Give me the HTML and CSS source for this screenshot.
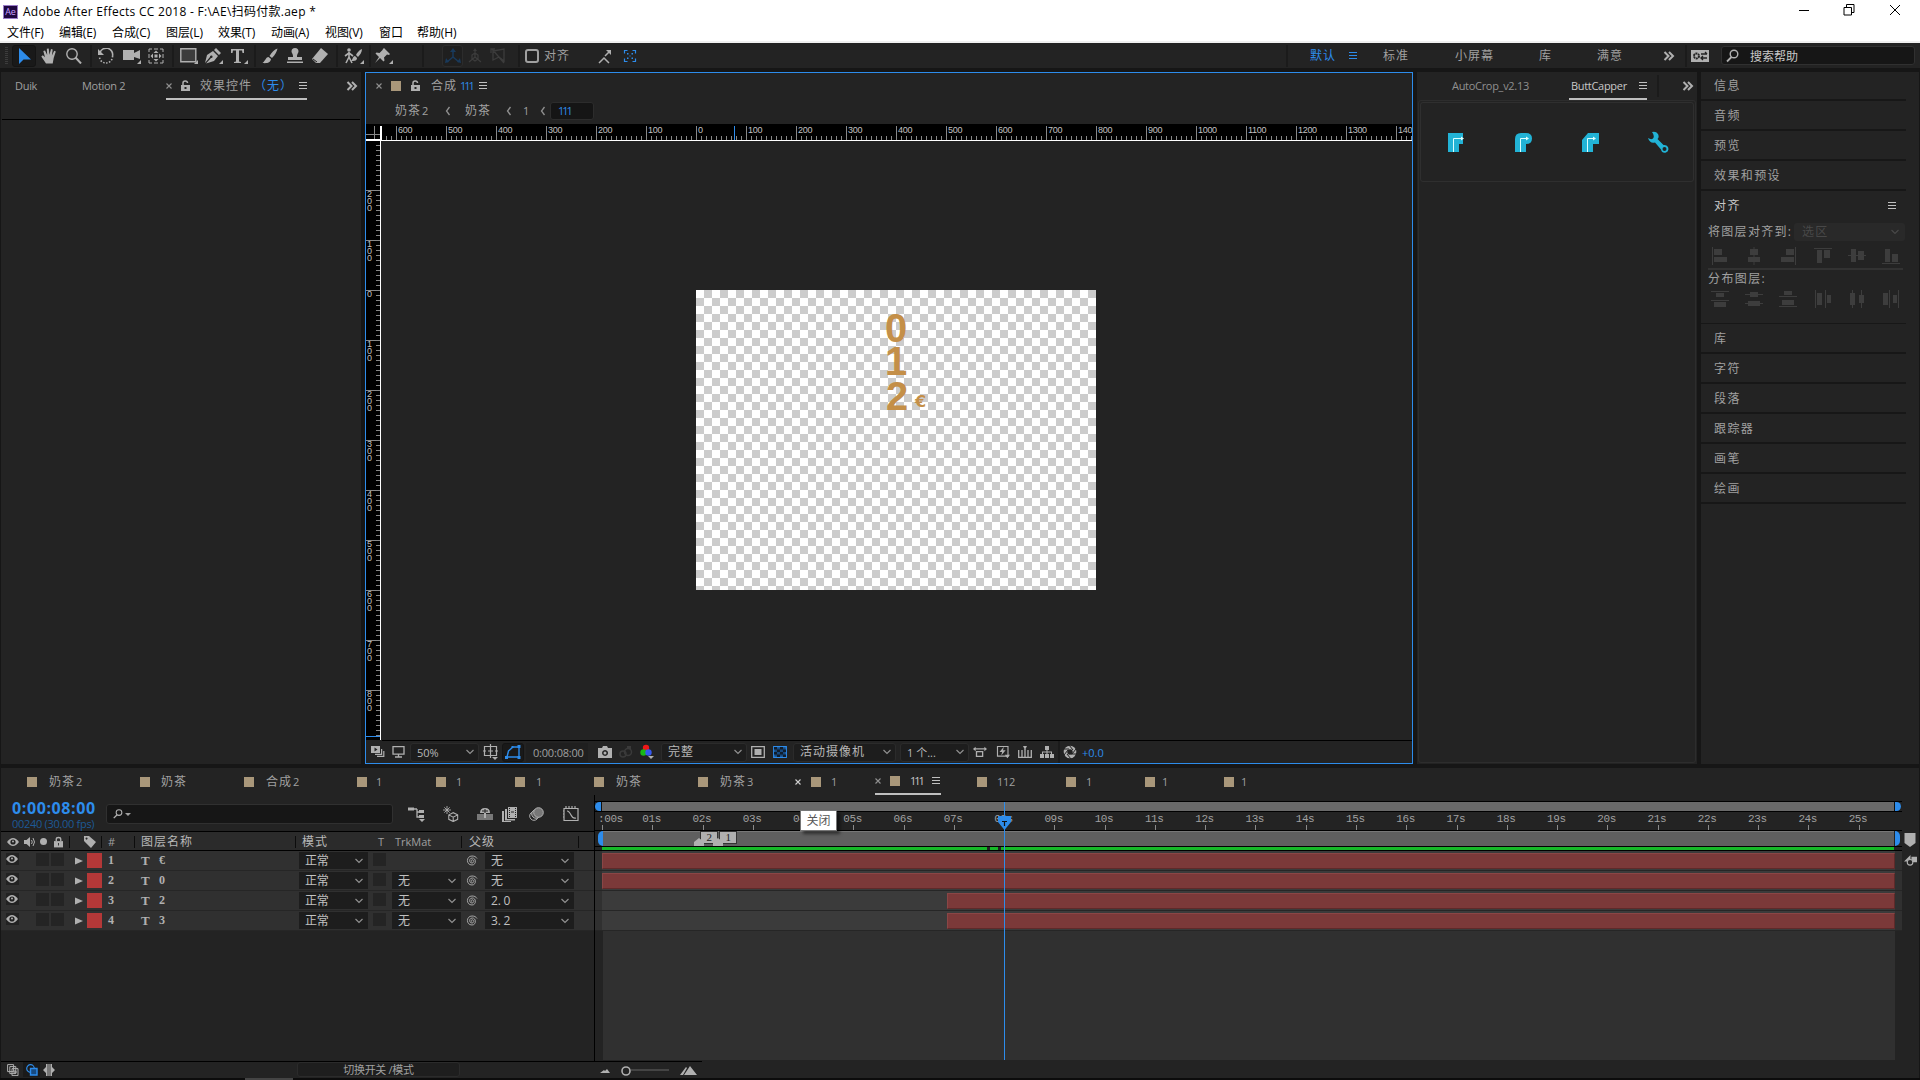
FILE: index.html
```
<!DOCTYPE html>
<html lang="zh-CN">
<head>
    <meta charset="UTF-8">
    <title>Adobe After Effects CC 2018 - F:\AE\扫码付款.aep *</title>
    <link rel="stylesheet" href="styles.css">
</head>
<body>
    <!-- icon sprite -->
    <svg class="sprite">
        <symbol id="arrow" viewBox="0 0 16 16"><path d="M3 0v16l4.500-4.500H15z"/></symbol>
        <symbol id="hand" viewBox="0 0 16 16"><path d="M5 15.500L.3 8.500l1.500-1.200L4 9.300 2.300 3l1.700-.6L6.200 7 5.800.700l1.900-.2L8.500 6.800 10 1l1.700.4L10.900 7.500l2.300-4.800 1.600.7L12.700 10l-1 5.500z"/></symbol>
        <symbol id="zoom" viewBox="0 0 16 16"><g fill="none" stroke="currentColor"><circle cx="6" cy="6" r="5.200" stroke-width="1.400"/><path d="M9.500 9.500L15 15.500" stroke-width="2"/></g></symbol>
        <symbol id="rotate" viewBox="0 0 16 16"><g fill="none" stroke="currentColor" stroke-width="1.600"><path d="M2 4.500A6.500 6.500 0 0 1 14.500 8"/><path d="M14.500 8A6.500 6.500 0 0 1 1.500 9" stroke-dasharray="1.500 1.500"/></g><path d="M0 1v6h6z"/></symbol>
        <symbol id="camera" viewBox="0 0 18 16"><path d="M0 2h11v3L17 2v9l-6-2v3H0zM18 12v4h-4z"/></symbol>
        <symbol id="panbehind" viewBox="0 0 16 16"><path d="M1 4V1h3M6 1h4M12 1h3v3M15 6v4M15 12v3h-3M10 15H6M4 15H1v-3M1 10V6" fill="none" stroke="currentColor"/><path d="M8 2.500L10.500 5h-5zM8 13.500L5.500 11h5zM2.500 8L5 5.500v5zM13.500 8L11 10.500v-5zM6.500 6.500h3v3h-3z"/></symbol>
        <symbol id="rect" viewBox="0 0 18 16"><path d="M.8.800h15v13H.8z" fill="#3c3c3c" stroke="currentColor" stroke-width="1.400"/><path d="M18 12v4h-4z"/></symbol>
        <symbol id="pen" viewBox="0 0 18 16"><path d="M0 15L2 7l6-4 5 5-4 5-8 2.500L6 10a1.300 1.300 0 1 0-1-1zM9 2l2-2 5 5-2 2zM18 12v4h-4z"/></symbol>
        <symbol id="type" viewBox="0 0 18 16"><path d="M1 1h13v4h-1.500L12 2.500H9v11l2 .5v1H4v-1l2-.5v-11H3L2.500 5H1zM18 12v4h-4z"/></symbol>
        <symbol id="brush" viewBox="0 0 16 16"><path d="M15.500.500c-3 1-6 4-8 7.500l2.500 2c3-3 5-6.500 5.500-9.500zM6.500 9C4 9 4 12 .5 15c4 .5 8 0 8.500-4z"/></symbol>
        <symbol id="stamp" viewBox="0 0 16 16"><path d="M6 8c0-2-1.500-3-1.500-4.500a3.500 3.500 0 0 1 7 0C11.500 5 10 6 10 8v1h5v3H1V9h5zM0 13.500h16V15H0z"/></symbol>
        <symbol id="eraser" viewBox="0 0 16 16"><path d="M9 0l7 6-8 9H4L0 11z"/><path d="M1 11l4 3" stroke="#232323"/></symbol>
        <symbol id="roto" viewBox="0 0 20 16"><circle cx="5" cy="2" r="1.800"/><path d="M5 4v5l3 6M5 9l-3 6M5 5L1 8M5 5l4 3" fill="none" stroke="currentColor" stroke-width="1.600"/><path d="M18 1c-3 1-5 4-6 6l2 2c2-2 4-5 4-8zM11 8c-2 0-2 3-4 5 3 0 6 0 6-3zM20 12v4h-4z"/></symbol>
        <symbol id="pin" viewBox="0 0 18 16"><path d="M9 0l6 6-1 1-2-.5L9 9.500l.5 3-1 1L5 10l-5 5 4-6-3.500-3.500 1-1 3 .5 3-3L8 1zM18 12v4h-4z"/></symbol>
        <symbol id="axis" viewBox="0 0 16 16"><path d="M8 9V2M8 9l-6 5M8 9l6 5" fill="none" stroke="currentColor" stroke-width="1.500"/><path d="M8 0l3 4H5zM0 15l1-5 3 4zM16 15l-1-5-3 4z"/></symbol>
        <symbol id="cube" viewBox="0 0 16 16"><path d="M8 9V2M8 9l-6 5M8 9l6 5M5 7l3-2 3 2v4l-3 2-3-2z" fill="none" stroke="currentColor" stroke-width="1.200"/><path d="M8 0l2 3H6z"/></symbol>
        <symbol id="view3d" viewBox="0 0 16 16"><path d="M3 3l11-2v12l-5-4-6 3zM2 1l12 14M1 5V1h4" fill="none" stroke="currentColor" stroke-width="1.300"/></symbol>
        <symbol id="snap" viewBox="0 0 16 16"><path d="M2 15l5-5 5 5M8 8l5-5" fill="none" stroke="currentColor" stroke-width="1.500"/><path d="M9 2h5v5z"/></symbol>
        <symbol id="snapbox" viewBox="0 0 16 16"><path d="M2.500 5.500v-3h3M10.500 2.500h3v3M13.500 10.500v3h-3M5.500 13.500h-3v-3" fill="none" stroke="currentColor" stroke-width="1.200"/><path d="M5 5h1.500v1.500H5zM9.500 5H11v1.500H9.500zM5 9.500h1.500V11H5zM9.500 9.500H11V11H9.500zM7.500 7.500h1v1h-1z"/></symbol>
        <symbol id="more" viewBox="0 0 12 10"><path d="M1.500 1l4 4-4 4M6 1l4 4-4 4" fill="none" stroke="currentColor" stroke-width="2"/></symbol>
        <symbol id="menu" viewBox="0 0 8 8"><path d="M0 0h8v1H0zM0 3h8v1H0zM0 6h8v1H0z"/></symbol>
        <symbol id="sync" viewBox="0 0 20 12"><path d="M1 0h18v12H1z"/><circle cx="6.500" cy="6" r="2.500" fill="none" stroke="#232323" stroke-width="2" stroke-dasharray="2 .6"/><path d="M11 4h6M15 2l2 2M11 8h6M13 6l-2 2 2 2" fill="none" stroke="#232323" stroke-width="1.300"/></symbol>
        <symbol id="search" viewBox="0 0 16 14"><circle cx="8" cy="5" r="3.800" fill="none" stroke="currentColor" stroke-width="1.400"/><path d="M5.500 8L1 12.500" stroke="currentColor" stroke-width="1.800"/></symbol>
        <symbol id="x" viewBox="0 0 6 6"><path d="M.5.500l5 5M5.500.500l-5 5" stroke="currentColor" stroke-width="1.100"/></symbol>
        <symbol id="lock" viewBox="0 0 10 12"><path d="M0 5h9v6H0zM3.500 7v2h2V7z" fill-rule="evenodd"/><path d="M2 5V3q0-2 2.200-2t2.300 2" fill="none" stroke="currentColor" stroke-width="1.500"/></symbol>
        <symbol id="locked" viewBox="0 0 10 12"><path d="M0 5h10v7H0z"/><path d="M2.500 5V3q0-2 2.500-2t2.500 2v2" fill="none" stroke="currentColor" stroke-width="1.500"/><path d="M4.500 7h1v3h-1z" fill="#2b2b2b"/></symbol>
        <symbol id="back" viewBox="0 0 6 10"><path d="M4.500 1L1.500 5l3 4" fill="none" stroke="currentColor" stroke-width="1.300"/></symbol>
        <symbol id="chev" viewBox="0 0 8 6"><path d="M.5 1L4 4.500 7.500 1" fill="none" stroke="currentColor" stroke-width="1.200"/></symbol>
        <symbol id="preview" viewBox="0 0 14 12"><path d="M0 0h9v7H0zM10 3h1.200v6H4V7.800h6zM12.200 5h1.200v6H6V9.800h6.200z"/><path d="M3.500 1.500v4l3-2z" fill="#232323"/></symbol>
        <symbol id="monitor" viewBox="0 0 14 12"><path d="M1 .7h11v7.500H1zM6.500 8v2.500M3 11h7" fill="none" stroke="currentColor" stroke-width="1.300"/></symbol>
        <symbol id="safe" viewBox="0 0 16 16"><path d="M1.500 2.500h12v9h-12zM7.500 0v14M0 7h3M12 7h3M5 7h5" fill="none" stroke="currentColor" stroke-width="1.200"/><path d="M9 13h6l-3 3z"/></symbol>
        <symbol id="mask" viewBox="0 0 16 14"><path d="M2 12L3.500 6 8 2h6v10z" fill="none" stroke="currentColor" stroke-width="1.400"/><path d="M0 11h3v3H0zM12.500 11h3v3h-3zM12.500 0h3v3h-3zM6.500 1h2v2h-2z"/></symbol>
        <symbol id="photo" viewBox="0 0 14 12"><path d="M0 2h4l1-2h4l1 2h4v10H0zM7 4a3 3 0 1 0 .1 0z" fill-rule="evenodd"/><circle cx="7" cy="7" r="1.500"/></symbol>
        <symbol id="ghost" viewBox="0 0 14 12"><circle cx="4" cy="8" r="3" fill="none" stroke="currentColor" stroke-width="1.500"/><circle cx="9" cy="6" r="3.500" fill="none" stroke="currentColor" stroke-width="1.500"/><path d="M8 0h4v3H8z"/></symbol>
        <symbol id="rgb" viewBox="0 0 16 16"><circle cx="6" cy="4" r="3.200" fill="#f01818"/><circle cx="3.500" cy="8.500" r="3.200" fill="#18b818"/><circle cx="8.500" cy="8.500" r="3.200" fill="#3558f0"/><path d="M8 12h6l-3 3z"/></symbol>
        <symbol id="region" viewBox="0 0 14 12"><path d="M.7.700h12.600v10.600H.7z" fill="none" stroke="currentColor" stroke-width="1.300"/><path d="M3.500 3h7v6h-7z"/></symbol>
        <symbol id="grid" viewBox="0 0 14 12"><path d="M.7.700h12.600v10.600H.7z" fill="#174a80" stroke="currentColor" stroke-width="1.200"/><path d="M1 1h3v2.500H1zM7 1h3v2.500H7zM4 3.500h3V6H4zM10 3.500h3V6h-3zM1 6h3v2.500H1zM7 6h3v2.500H7zM4 8.500h3V11H4zM10 8.500h3V11h-3z" fill="#101d2c"/></symbol>
        <symbol id="aspect" viewBox="0 0 16 12"><path d="M1 2.500h13M4 5.500h7v5.500H4z" fill="none" stroke="currentColor" stroke-width="1.500"/><path d="M0 2.500L3 0v5zM16 2.500L13 0v5z"/></symbol>
        <symbol id="fast" viewBox="0 0 16 14"><path d="M1.700.700h12v11h-12z" fill="none" stroke="currentColor" stroke-width="1.300"/><path d="M9 1L4 7h3l-1 4 5-6H8zM10 10h6l-3 4z"/></symbol>
        <symbol id="tl" viewBox="0 0 14 12"><path d="M.7 4v7.300h12.600V4M4 11V4M7 11V3M10 11V4" fill="none" stroke="currentColor" stroke-width="1.300"/><path d="M5 0h4L7 4z"/></symbol>
        <symbol id="flow" viewBox="0 0 14 12"><path d="M5 0h4v4H5zM0 8h4v4H0zM5 8h4v4H5zM10 8h4v4h-4zM6.500 4h1v4h-1zM2 5.500h10v1H2zM2 6h1v2H2zM11 6h1v2h-1z"/></symbol>
        <symbol id="aperture" viewBox="0 0 14 14"><circle cx="7" cy="7" r="4.500" fill="none" stroke="currentColor" stroke-width="3.600"/><path d="M6 0l4 5M13 4l-4 5M14 9H8M8 14L4 9M1 10l4-5M0 4h6" stroke="#232323"/></symbol>
        <symbol id="wrench" viewBox="0 0 22 22"><path d="M1 7Q4 9 6 7.500 8 5 5 1q4-1 6 2 1.500 3-.5 5l6 6q3-.5 4.500 2 1.500 4-2 5.500-4 1-5-3l-6-7Q3 13 1 7z"/><circle cx="17.500" cy="18" r="2" fill="#232323"/></symbol>
        <symbol id="al1" viewBox="0 0 18 18"><path d="M1 0h1v18H1zM3 2h8v6H3zM3 10h13v5H3z"/></symbol>
        <symbol id="al2" viewBox="0 0 18 18"><path d="M8.500 0h1v18h-1zM5 2h8v6H5zM3 10h12v5H3z"/></symbol>
        <symbol id="al3" viewBox="0 0 18 18"><path d="M16 0h1v18h-1zM7 2h8v6H7zM2 10h13v5H2z"/></symbol>
        <symbol id="al4" viewBox="0 0 18 18"><path d="M0 1h18v1H0zM3 3h5v13H3zM10 3h6v8h-6z"/></symbol>
        <symbol id="al5" viewBox="0 0 18 18"><path d="M0 8h18v1H0zM3 2h5v13H3zM10 4h6v9h-6z"/></symbol>
        <symbol id="al6" viewBox="0 0 18 18"><path d="M0 16h18v1H0zM3 2h5v13H3zM10 7h6v8h-6z"/></symbol>
        <symbol id="di1" viewBox="0 0 18 18"><path d="M0 1h18v1H0zM5 3h8v4H5zM0 10h18v1H0zM3 12h12v5H3z"/></symbol>
        <symbol id="di2" viewBox="0 0 18 18"><path d="M0 4h18v1H0zM5 2h8v5H5zM0 13h18v1H0zM3 11h12v5H3z"/></symbol>
        <symbol id="di3" viewBox="0 0 18 18"><path d="M0 6h18v1H0zM5 1h8v4H5zM0 16h18v1H0zM3 10h12v5H3z"/></symbol>
        <symbol id="di4" viewBox="0 0 18 18"><path d="M1 0h1v18H1zM3 3h5v12H3zM11 0h1v18h-1zM13 5h4v8h-4z"/></symbol>
        <symbol id="di5" viewBox="0 0 18 18"><path d="M4 0h1v18H4zM2 3h5v12H2zM13 0h1v18h-1zM11 5h5v8h-5z"/></symbol>
        <symbol id="di6" viewBox="0 0 18 18"><path d="M7 0h1v18H7zM1 3h5v12H1zM16 0h1v18h-1zM11 5h4v8h-4z"/></symbol>
        <symbol id="shy" viewBox="0 0 18 16"><path d="M5 3h4M9 3v8h4M9 6h3" fill="none" stroke="currentColor" stroke-width="1.300"/><path d="M0 1.500h6v3H0zM11 4h5v3h-5zM11 9h5v3h-5zM11 13h6l-3 3z"/></symbol>
        <symbol id="draft" viewBox="0 0 18 18"><path d="M4.500 0v9M0 4.500h9M1.500 1.500l6 6M7.500 1.500l-6 6" stroke="currentColor"/><path d="M6.500 10l5-2.500 5 2.500v5l-5 2.500-5-2.500zM6.500 10l5 2.500 5-2.500M11.500 12.500v5" fill="none" stroke="currentColor" stroke-width="1.200"/></symbol>
        <symbol id="shyguy" viewBox="0 0 16 14"><path d="M0 7h16v6H0z" opacity=".6"/><path d="M3 6q0-5 5-5t5 5zM7 6h2v5H7z"/><path d="M8 2v4M5 4h6" stroke="#232323"/></symbol>
        <symbol id="film" viewBox="0 0 16 14"><path d="M6 0h9v11H6zM3 2h2v10h8v1.500H3zM0 4h2v10h7v1H0z"/><path d="M7.500 1v9M13.500 1v9" stroke="#232323" stroke-dasharray="1 1"/><path d="M9 5h3" stroke="#232323"/></symbol>
        <symbol id="blur" viewBox="0 0 16 14"><circle cx="5" cy="9" r="4.300" fill="none" stroke="currentColor"/><circle cx="7" cy="7" r="4.300" fill="#555" stroke="currentColor"/><circle cx="9.500" cy="5.500" r="4.800" fill="#777" stroke="currentColor"/></symbol>
        <symbol id="graph" viewBox="0 0 16 16"><path d="M1 2.500h14v12H1zM4 5q2 0 4 4t5 3M3 0v2M6 0v2M9 0v2M12 0v2M0 5h1M0 8h1M0 11h1" fill="none" stroke="currentColor" stroke-width="1.200"/></symbol>
        <symbol id="eye" viewBox="0 0 12 8"><path d="M0 4q3-4 6-4t6 4q-3 4-6 4T0 4z"/><circle cx="6" cy="4" r="2.600" fill="#222"/><circle cx="6" cy="3.500" r="1"/></symbol>
        <symbol id="speaker" viewBox="0 0 12 12"><path d="M0 4h2.500L6 1v10L2.500 8H0z"/><path d="M7.500 4q1.500 2 0 4M9 2q3 4 0 8" fill="none" stroke="currentColor"/></symbol>
        <symbol id="tag" viewBox="0 0 12 12"><path d="M0 0h5l7 6-5 6-7-7zM2.500 1.500a1 1 0 1 0 .1 0z" fill-rule="evenodd"/></symbol>
        <symbol id="twirl" viewBox="0 0 8 8"><path d="M0 .5v7L8 4z"/></symbol>
        <symbol id="whip" viewBox="0 0 12 12"><path d="M6 6.500C5 6.500 5 4.800 6.300 4.800 8.500 4.800 8.300 8 6 8 2.800 8 2.800 3 6.300 3c4.200 0 4.200 7-.3 7C-.2 10 0 1 6 1c2.500 0 4 .8 5 2.500" fill="none" stroke="currentColor" stroke-width=".9"/></symbol>
        <symbol id="copies" viewBox="0 0 12 12"><path d="M.6.600h6v7h-6zM2.800 2.600h6v7h-6zM5 4.600h6v7H5zM6 8h4M8 6v4" fill="#232323" stroke="currentColor"/></symbol>
        <symbol id="modes" viewBox="0 0 12 12"><circle cx="4.500" cy="4.500" r="3.800" fill="none" stroke="currentColor" stroke-width="1.200"/><path d="M4.500 4.500h6.500v6.500H4.500z" fill="#174a80" stroke="currentColor" stroke-width="1.400"/></symbol>
        <symbol id="inout" viewBox="0 0 12 12"><path d="M3 0h6v3l3 3-3 3v3H3V9L0 6l3-3z"/><path d="M4 0h4v12H4z" fill="#777"/></symbol>
    </svg>

    <div class="titlebar">
        <span class="logo">Ae</span>
        <span class="app-name">Adobe After Effects CC 2018 - F:\AE\扫码付款.aep *</span>
        <svg class="winctl" viewBox="0 0 110 14"><path d="M0 7.500h10M45 4.500h7.500V12H45zM47.500 4V1.500H55V9.500h-2.500M91 2l10 10M101 2L91 12" fill="none" stroke="#000"/></svg>
    </div>
    <div class="menubar">
        <span>文件(F)</span><span>编辑(E)</span><span>合成(C)</span><span>图层(L)</span><span>效果(T)</span><span>动画(A)</span><span>视图(V)</span><span>窗口</span><span>帮助(H)</span>
    </div>

    <div class="toolbar">
        <i class="grip"></i>
        <span class="tool-on"><svg><use href="#arrow"/></svg></span>
        <svg><use href="#hand"/></svg>
        <svg><use href="#zoom"/></svg>
        <i class="sep"></i>
        <svg><use href="#rotate"/></svg>
        <svg class="w18"><use href="#camera"/></svg>
        <svg><use href="#panbehind"/></svg>
        <i class="sep"></i>
        <svg class="w18"><use href="#rect"/></svg>
        <svg class="w18"><use href="#pen"/></svg>
        <svg class="w18"><use href="#type"/></svg>
        <i class="sep"></i>
        <svg><use href="#brush"/></svg>
        <svg><use href="#stamp"/></svg>
        <svg><use href="#eraser"/></svg>
        <i class="sep"></i>
        <svg class="w20"><use href="#roto"/></svg>
        <i class="sep"></i>
        <svg class="w18"><use href="#pin"/></svg>
        <i class="sep"></i>
        <span class="tool-off"><svg><use href="#axis"/></svg></span>
        <svg class="dim"><use href="#cube"/></svg>
        <svg class="dim"><use href="#view3d"/></svg>
        <i class="sep"></i>
        <i class="checkbox"></i>
        <span class="cn">对齐</span>
        <svg><use href="#snap"/></svg>
        <svg class="blue"><use href="#snapbox"/></svg>
        <i class="sep"></i>
        <span class="cn blue">默认</span>
        <svg class="menu-ico blue"><use href="#menu"/></svg>
        <span class="cn">标准</span>
        <span class="cn">小屏幕</span>
        <span class="cn">库</span>
        <span class="cn">满意</span>
        <svg class="more"><use href="#more"/></svg>
        <i class="sep"></i>
        <svg class="sync"><use href="#sync"/></svg>
        <div class="help-search"><svg><use href="#search"/></svg><span>搜索帮助</span></div>
    </div>

    <div class="workspace">
        <div class="panel effects">
            <div class="tabs effects-tabs">
                <span>Duik</span>
                <span>Motion 2</span>
                <div class="tab-active effects-active">
                    <svg class="x"><use href="#x"/></svg>
                    <svg class="lock"><use href="#lock"/></svg>
                    <span class="cn">效果控件</span>
                    <span class="cn blue">（无）</span>
                    <svg class="menu-ico"><use href="#menu"/></svg>
                </div>
                <svg class="more"><use href="#more"/></svg>
            </div>
            <div class="effects-line"></div>
        </div>

        <div class="panel comp">
            <div class="tabs comp-tabs">
                <svg class="x"><use href="#x"/></svg>
                <i class="swatch"></i>
                <svg class="lock"><use href="#lock"/></svg>
                <span class="cn">合成</span>
                <span class="blue ones">111</span>
                <svg class="menu-ico"><use href="#menu"/></svg>
            </div>
            <div class="crumbs">
                <span><b class="cn">奶茶</b> 2</span>
                <svg class="back"><use href="#back"/></svg>
                <span class="cn">奶茶</span>
                <svg class="back"><use href="#back"/></svg>
                <span>1</span>
                <svg class="back"><use href="#back"/></svg>
                <span class="crumb-on ones">111</span>
            </div>
            <div class="stage">
                <div class="corner"></div>
                <div class="ruler-h" id="ruler-h"><i class="cursor-x"></i></div>
                <div class="ruler-v" id="ruler-v"><i class="cursor-y"></i></div>
                <div class="viewer">
                    <div class="canvas">
                        <span class="num n0">0</span>
                        <span class="num n1">1</span>
                        <span class="num n2">2</span>
                        <span class="euro">€</span>
                    </div>
                </div>
            </div>
            <div class="viewbar">
                <svg class="i14"><use href="#preview"/></svg>
                <svg class="i14"><use href="#monitor"/></svg>
                <div class="select"><span>50%</span><svg class="chev"><use href="#chev"/></svg></div>
                <svg><use href="#safe"/></svg>
                <span class="tool-on mask-on"><svg class="blue"><use href="#mask"/></svg></span>
                <span class="view-time">0:00:08:00</span>
                <svg class="i14"><use href="#photo"/></svg>
                <svg class="i14 faint"><use href="#ghost"/></svg>
                <svg><use href="#rgb"/></svg>
                <div class="select"><span class="cn">完整</span><svg class="chev"><use href="#chev"/></svg></div>
                <svg class="i14"><use href="#region"/></svg>
                <svg class="i14 blue"><use href="#grid"/></svg>
                <div class="select"><span class="cn">活动摄像机</span><svg class="chev"><use href="#chev"/></svg></div>
                <div class="select"><span>1 个...</span><svg class="chev"><use href="#chev"/></svg></div>
                <svg class="i14"><use href="#aspect"/></svg>
                <svg class="i14"><use href="#fast"/></svg>
                <svg class="i14"><use href="#tl"/></svg>
                <svg class="i14"><use href="#flow"/></svg>
                <i class="sep"></i>
                <svg class="i14"><use href="#aperture"/></svg>
                <span class="blue">+0.0</span>
            </div>
        </div>

        <div class="panel scripts">
            <div class="tabs scripts-tabs">
                <span>AutoCrop_v2.13</span>
                <div class="tab-active"><span>ButtCapper</span><svg class="menu-ico"><use href="#menu"/></svg></div>
                <i class="sep"></i>
                <svg class="more"><use href="#more"/></svg>
            </div>
            <div class="scripts-frame">
                <div class="caps">
                    <svg viewBox="0 0 17 19"><path d="M0 0h15v11h-4v8H0z"/><path d="M5.500 19V5.500H14" class="hair"/><path d="M13 3.500l3 2-3 2z" fill="#dff"/></svg>
                    <svg viewBox="0 0 17 19"><path d="M0 19V6q0-6 6-6h5q6 0 6 5.500T11 11v8z"/><path d="M5.500 19V5.500H12" class="hair"/><path d="M11 3.500l3 2-3 2z" fill="#dff"/></svg>
                    <svg viewBox="0 0 17 19"><path d="M0 19V7l6-7h11v11h-6v8z"/><path d="M5.500 19V5.500H12" class="hair"/><path d="M11 3.500l3 2-3 2z" fill="#dff"/></svg>
                    <svg class="wrench"><use href="#wrench"/></svg>
                </div>
            </div>
        </div>

        <div class="panel side">
            <div class="side-item">信息</div>
            <div class="side-item">音频</div>
            <div class="side-item">预览</div>
            <div class="side-item">效果和预设</div>
            <div class="align-panel">
                <div class="align-title"><span>对齐</span><svg class="menu-ico"><use href="#menu"/></svg></div>
                <div class="align-to"><span>将图层对齐到:</span><div class="align-select"><span>选区</span><svg class="chev"><use href="#chev"/></svg></div></div>
                <div class="align-icons">
                    <svg><use href="#al1"/></svg><svg><use href="#al2"/></svg><svg><use href="#al3"/></svg><svg><use href="#al4"/></svg><svg><use href="#al5"/></svg><svg><use href="#al6"/></svg>
                </div>
                <div class="distribute">分布图层:</div>
                <div class="align-icons">
                    <svg><use href="#di1"/></svg><svg><use href="#di2"/></svg><svg><use href="#di3"/></svg><svg><use href="#di4"/></svg><svg><use href="#di5"/></svg><svg><use href="#di6"/></svg>
                </div>
            </div>
            <div class="side-item">库</div>
            <div class="side-item">字符</div>
            <div class="side-item">段落</div>
            <div class="side-item">跟踪器</div>
            <div class="side-item">画笔</div>
            <div class="side-item">绘画</div>
        </div>
    </div>

    <div class="timeline">
        <div class="tl-tabs">
            <i class="swatch"></i><span><b class="cn">奶茶</b> 2</span>
            <i class="swatch"></i><span class="cn">奶茶</span>
            <i class="swatch"></i><span><b class="cn">合成</b> 2</span>
            <i class="swatch"></i><span>1</span>
            <i class="swatch"></i><span>1</span>
            <i class="swatch"></i><span>1</span>
            <i class="swatch"></i><span class="cn">奶茶</span>
            <i class="swatch"></i><span><b class="cn">奶茶</b> 3</span>
            <svg class="x bright"><use href="#x"/></svg><i class="swatch"></i><span>1</span>
            <div class="tab-active tl-active"><svg class="x"><use href="#x"/></svg><i class="swatch"></i><span class="ones">111</span><svg class="menu-ico"><use href="#menu"/></svg></div>
            <i class="swatch"></i><span>112</span>
            <i class="swatch"></i><span>1</span>
            <i class="swatch"></i><span>1</span>
            <i class="swatch"></i><span>1</span>
        </div>
        <div class="tl-main">
            <div class="layers">
                <div class="layers-top">
                    <div class="timecode"><b>0:00:08:00</b><span>00240 (30.00 fps)</span></div>
                    <div class="layer-search"><svg><use href="#search"/></svg><i></i></div>
                    <svg class="w18"><use href="#shy"/></svg>
                    <svg class="w18"><use href="#draft"/></svg>
                    <svg><use href="#shyguy"/></svg>
                    <svg><use href="#film"/></svg>
                    <svg><use href="#blur"/></svg>
                    <svg><use href="#graph"/></svg>
                </div>
                <div class="columns">
                    <svg class="eye"><use href="#eye"/></svg>
                    <svg class="i12"><use href="#speaker"/></svg>
                    <i class="dot"></i>
                    <svg class="lock"><use href="#locked"/></svg>
                    <i class="col-sep"></i>
                    <svg class="i12"><use href="#tag"/></svg>
                    <i class="col-sep"></i>
                    <span>#</span>
                    <i class="col-sep"></i>
                    <span class="cn">图层名称</span>
                    <i class="col-sep"></i>
                    <span class="cn">模式</span>
                    <span>T</span>
                    <span>TrkMat</span>
                    <i class="col-sep"></i>
                    <span class="cn">父级</span>
                    <i class="col-sep"></i>
                </div>
                <div id="layer-rows"></div>
            </div>
            <div class="tracks">
                <div class="navigator"><i class="cap-l"></i><i class="nav-bar"></i><i class="cap-r"></i></div>
                <div class="time-ruler" id="time-ruler"></div>
                <div class="work-area">
                    <i class="cap-l"></i><i class="work-bar"></i><i class="cap-r"></i>
                    <span class="marker m2">2</span><span class="marker m1">1</span>
                    <i class="pent p2"></i><i class="pent p1"></i>
                </div>
                <div class="cache"><i></i><i></i><i></i></div>
                <div id="track-rows"></div>
                <div class="track-rest"></div>
                <div class="playhead"><svg viewBox="0 0 13 14"><path d="M0 0h13v6l-6.500 8L0 6z"/><path d="M4 5.500h5M6.500 6v4" stroke="#111" stroke-width="1.200"/></svg></div>
            </div>
            <div class="tl-side">
                <svg viewBox="0 0 12 14"><path d="M0 0h11v10l-5.500 4L0 10z"/></svg>
                <svg viewBox="0 0 14 13"><path d="M8 3h6v6H8zM0 8l7-7v7z"/><circle cx="6.500" cy="9" r="3" fill="#232323" stroke="currentColor" stroke-width="1.200"/></svg>
            </div>
        </div>
        <div class="tl-foot">
            <svg class="i12"><use href="#copies"/></svg>
            <span class="foot-on"><svg class="i12 blue"><use href="#modes"/></svg></span>
            <svg class="i12"><use href="#inout"/></svg>
            <div class="switches">切换开关 /模式</div>
            <svg class="zoomer" viewBox="0 0 102 14"><path d="M0 10l4-3 1 1 2-2 3 4zM80 12l6-8 1 1-4 7zM84 12l6-9 7 9z"/><path d="M31 7h38" stroke="#444" stroke-width="2"/><circle cx="26" cy="8" r="4" fill="none" stroke="currentColor" stroke-width="1.600"/></svg>
        </div>
        <div class="tooltip">关闭</div>
    </div>
    <div class="bottom-edge"><i></i></div>

    <script>
        // composition rulers, one label every 100 px of the composition
        const rulerH = document.getElementById('ruler-h');
        for (let v = -600; v <= 1400; v += 100) {
            rulerH.insertAdjacentHTML('beforeend', `<span>${Math.abs(v)}</span>`);
        }
        const rulerV = document.getElementById('ruler-v');
        for (let v = -200; v <= 800; v += 100) {
            rulerV.insertAdjacentHTML('beforeend', `<span>${Math.abs(v)}</span>`);
        }

        const timeRuler = document.getElementById('time-ruler');
        for (let s = 0; s <= 25; s++) {
            const label = s === 0 ? ':00s' : String(s).padStart(2, '0') + 's';
            timeRuler.insertAdjacentHTML('beforeend', `<span>${label}</span>`);
        }

        const layers = [
            { name: '€', trk: null, parent: '无', start: 0 },
            { name: '0', trk: '无', parent: '无', start: 0 },
            { name: '2', trk: '无', parent: '2. 0', start: 345 },
            { name: '3', trk: '无', parent: '3. 2', start: 345 }
        ];
        const select = text => `<div class="cell-select"><span>${text}</span><svg class="chev"><use href="#chev"/></svg></div>`;

        layers.forEach((layer, i) => {
            document.getElementById('layer-rows').insertAdjacentHTML('beforeend', `
                <div class="layer-row">
                    <span class="eye-box"><svg class="eye"><use href="#eye"/></svg></span>
                    <i class="box"></i><i class="box"></i>
                    <svg class="twirl"><use href="#twirl"/></svg>
                    <i class="label"></i>
                    <b>${i + 1}</b><b class="type">T</b><b>${layer.name}</b>
                    ${select('正常')}
                    <i class="box"></i>
                    ${layer.trk ? select(layer.trk) : '<span></span>'}
                    <svg class="i12"><use href="#whip"/></svg>
                    ${select(layer.parent)}
                </div>`);
            document.getElementById('track-rows').insertAdjacentHTML('beforeend', `
                <div class="track-row"><div class="track"><div class="bar" style="margin-left: ${layer.start}px"></div></div></div>`);
        });
    </script>
</body>
</html>
```
FILE: styles.css
```
* {
    box-sizing: border-box;
}
body {
    margin: 0;
    width: 1920px;
    height: 1080px;
    overflow: hidden;
    background: #161616;
    color: #a0a0a0;
    font-family: "Open Sans", "Noto Sans CJK SC", sans-serif;
    font-size: 11px;
    line-height: 1;
    letter-spacing: -0.3px;
    white-space: nowrap;
}
i, b {
    display: block;
    font-style: normal;
}
svg {
    display: block;
    width: 16px;
    height: 16px;
    fill: currentColor;
    color: #b0b0b0;
}
.sprite {
    position: absolute;
    width: 0;
    height: 0;
}
.cn {
    font-size: 12px;
    font-weight: normal;
    letter-spacing: 1px;
}
.blue, svg.blue {
    color: #2d8ceb;
}
.ones {
    letter-spacing: -2px;
}
svg.w18 { width: 18px; }
svg.w20 { width: 20px; }
svg.i14 { width: 14px; height: 14px; }
svg.i12 { width: 12px; height: 12px; }
svg.dim { color: #3c3c3c; }
svg.faint { color: #3a3a3a; }
svg.menu-ico { width: 8px; height: 8px; color: #c0c0c0; }
svg.menu-ico.blue { color: #2d8ceb; }
svg.more { width: 12px; height: 10px; }
svg.x { width: 6px; height: 6px; color: #909090; }
svg.x.bright { color: #d0d0d0; }
svg.lock { width: 10px; height: 12px; }
svg.back { width: 6px; height: 10px; color: #909090; }
svg.chev { width: 8px; height: 6px; color: #909090; }
svg.eye { width: 12px; height: 8px; }
.swatch {
    width: 10px;
    height: 10px;
    background: #a9977a;
}
.sep {
    width: 2px;
    height: 22px;
    background: #1b1b1b;
}

/* title + menu */
.titlebar {
    display: flex;
    align-items: center;
    height: 23px;
    padding-left: 3px;
    background: #fff;
    color: #000;
    font-size: 12px;
    letter-spacing: 0.280px;
}
.logo {
    width: 15px;
    height: 14px;
    margin-right: 5px;
    border: 1px solid #9a7cc8;
    background: #1f0740;
    color: #c9a0ff;
    font-size: 9px;
    line-height: 11px;
    letter-spacing: 0;
    text-align: center;
}
.app-name {
    flex: 1;
}
.winctl {
    width: 110px;
    height: 14px;
    margin-right: 11px;
    margin-top: -3px;
}
.menubar {
    display: grid;
    grid-template-columns: 52px 53px 54px 52px 53px 54px 54px 38px 60px;
    align-items: center;
    height: 20px;
    padding: 2px 0 0 7px;
    border-bottom: 2px solid #f0f0f0;
    background: #fff;
    color: #000;
    font-size: 12px;
    letter-spacing: -0.1px;
}

.toolbar {
    display: grid;
    grid-template-columns: 7px 29px 25px 24px 8px 25px 25px 24px 8px 25px 25px 24px 8px 25px 25px 24px 8px 25px 6px 47px 20px 25px 23px 28px 7px 19px 53px 25px 664px 24px 39px 34px 72px 84px 58px 66px 22px 5px 31px 194px;
    align-items: center;
    height: 25px;
    padding-left: 5px;
    background: #232323;
}
.grip {
    width: 3px;
    height: 18px;
    background: repeating-linear-gradient(#3c3c3c 0 1px, #232323 1px 2px);
}
.tool-on, .tool-off {
    display: flex;
    align-items: center;
    justify-content: center;
    width: 24px;
    height: 22px;
    border: 1px solid #141414;
    border-radius: 3px;
    background: #191919;
}
.tool-on svg {
    color: #2d8ceb;
}
.tool-off {
    width: 21px;
    border-color: #2c2c2c;
    background: #1f1f1f;
}
.tool-off svg {
    color: #193a5c;
}
.checkbox {
    width: 14px;
    height: 14px;
    border: 2px solid #a0a0a0;
    border-radius: 3px;
}
.toolbar .cn {
    padding-top: 1px;
}
svg.sync {
    width: 20px;
    height: 12px;
}
.help-search {
    display: flex;
    align-items: center;
    height: 19px;
    padding-left: 4px;
    border: 1px solid #303030;
    border-radius: 3px;
    background: #161616;
    color: #c8c8c8;
    font-size: 12px;
    letter-spacing: 0;
}
.help-search span {
    padding-top: 2px;
}
.help-search svg {
    height: 14px;
    margin-right: 8px;
}

/* upper panels */
.workspace {
    display: flex;
    height: 692px;
    margin: 4px 1px 4px;
}
.panel {
    background: #232323;
    height: 692px;
}
.tabs {
    display: grid;
    align-items: center;
}
.tab-active {
    height: 26px;
    border-bottom: 2px solid #c0c0c0;
    align-self: end;
    align-items: center;
    color: #c8c8c8;
}
.effects {
    width: 360px;
    margin-right: 4px;
}
.effects-tabs {
    grid-template-columns: 67px 84px 180px 12px;
    height: 28px;
    padding-left: 14px;
}
.effects-tabs .tab-active {
    height: 26px;
    width: 141px;
}
.effects-active {
    display: grid;
    grid-template-columns: 15px 19px 54px 45px 8px;
    color: #a0a0a0;
}
.effects-tabs, .comp-tabs, .scripts-tabs, .crumbs {
    line-height: 14px;
}
.effects-line {
    height: 1px;
    margin: 19px 1px 0;
    background: #000;
}

.panel.comp {
    width: 1048px;
    margin-right: 4px;
    border: 1px solid #2d8ceb;
}
.comp-tabs {
    grid-template-columns: 15px 20px 20px 29px 19px 8px;
    height: 25px;
    padding-left: 10px;
}
.crumbs {
    display: grid;
    grid-template-columns: 50px 20px 41px 17px 17px 10px 44px;
    align-items: center;
    height: 28px;
    padding: 0 0 1px 29px;
    border-bottom: 2px solid #000;
}
.crumbs span, .tl-tabs span {
    display: flex;
    align-items: center;
    gap: 1px;
}
.crumbs .crumb-on {
    height: 18px;
    padding-left: 7px;
    border: 1px solid #2c2c2c;
    border-radius: 3px;
    background: #151515;
    color: #2d8ceb;
    gap: 0;
}
.stage {
    display: grid;
    grid-template: 15px 600px / 16px 1030px;
}
.corner {
    border-right: 2px solid #fff;
    border-bottom: 2px solid #fff;
    background: linear-gradient(#888, #888) 8px 0 / 1px 100% no-repeat, linear-gradient(#888, #888) 0 8px / 100% 1px no-repeat, #000;
}
.ruler-h {
    position: relative;
    display: flex;
    overflow: hidden;
    padding: 0 0 0 16px;
    border-bottom: 1px solid #fff;
    background: linear-gradient(90deg, #888 1px, transparent 1px) 4px 100% / 5px 4px repeat-x, linear-gradient(90deg, #888 1px, transparent 1px) 14px 0 / 50px 14px repeat-x, #000;
}
.ruler-h span {
    flex: 0 0 50px;
    color: #c0c0c0;
    font: 9px/8px "Liberation Sans", sans-serif;
    letter-spacing: -0.3px;
}
.cursor-x {
    position: absolute;
    top: 0;
    left: 352px;
    width: 1px;
    height: 14px;
    background: #2d8ceb;
}
.ruler-v {
    position: relative;
    width: 15px;
    height: 599px;
    overflow: hidden;
    padding: 50px 0 0 1px;
    border-right: 1px solid #fff;
    background: linear-gradient(#888 1px, transparent 1px) 100% 4px / 4px 5px repeat-y, linear-gradient(#888 1px, transparent 1px) 0 49px / 14px 50px repeat-y, #000;
}
.ruler-v span {
    display: block;
    width: 6px;
    height: 50px;
    white-space: normal;
    word-break: break-all;
    color: #c0c0c0;
    font: 9px/7px "Liberation Sans", sans-serif;
}
.cursor-y {
    position: absolute;
    top: 595px;
    left: 0;
    width: 14px;
    height: 1px;
    background: #2d8ceb;
}
.viewer {
    padding: 149px 0 0 314px;
    border-bottom: 1px solid #000;
}
.canvas {
    position: relative;
    width: 400px;
    height: 300px;
    background: repeating-conic-gradient(#ccc 0 25%, #fff 0 50%) 0 0 / 16px 16px;
    color: #c48f48;
    font-family: "Liberation Sans", sans-serif;
    letter-spacing: 0;
}
.num {
    position: absolute;
    font-size: 40px;
    font-weight: bold;
}
.n0 { left: 189px; top: 18px; }
.n1 { left: 189px; top: 51px; }
.n2 { left: 190px; top: 86px; }
.euro {
    position: absolute;
    left: 219px;
    top: 104px;
    font: bold 16px/16px "DejaVu Sans", sans-serif;
}
.viewbar {
    display: grid;
    grid-template-columns: 21px 18px 73px 19px 24px 72px 21px 21px 21px 90px 22px 20px 107px 73px 23px 22px 22px 18px 5px 19px 30px;
    align-items: center;
    height: 22px;
    padding-left: 5px;
    letter-spacing: 0;
}
.select {
    display: flex;
    align-items: center;
    justify-content: space-between;
    height: 19px;
    margin-right: 4px;
    padding: 0 4px 0 6px;
    border: 1px solid #2b2b2b;
    border-radius: 3px;
    background: #1d1d1d;
    color: #b8b8b8;
}
.mask-on {
    width: 22px;
    height: 19px;
}
.view-time {
    width: 62px;
    height: 19px;
    padding-left: 7px;
    background: #1f1f1f;
    line-height: 19px;
    letter-spacing: -0.2px;
}

.scripts {
    width: 280px;
    margin-right: 4px;
    color: #909090;
}
.scripts-tabs {
    grid-template-columns: 117px 88px 25px 12px;
    height: 28px;
    padding-left: 35px;
}
.scripts-tabs .tab-active {
    display: flex;
    justify-content: space-between;
    width: 78px;
    padding: 0 0 0 2px;
}
.scripts-frame {
    height: 663px;
    margin: 0 1px;
    padding: 1px;
    border: 1px solid #2d2d2d;
    border-radius: 3px;
}
.caps {
    display: grid;
    grid-template-columns: 67px 67px 66px 22px;
    height: 80px;
    padding: 30px 0 0 27px;
    border: 1px solid #2f2f2f;
    border-radius: 3px;
}
.caps svg {
    width: 17px;
    height: 19px;
    color: #22b3d6;
}
.caps .wrench {
    width: 22px;
    height: 22px;
    margin: -2px 0 0 -1px;
}
.hair {
    fill: none;
    stroke: #dff;
}

.side {
    width: 218px;
    padding-right: 13px;
    font-size: 12px;
    letter-spacing: 1.400px;
}
.side-item {
    height: 30px;
    padding: 0 0 0 13px;
    border-bottom: 2px solid #171717;
    line-height: 29px;
}
.side-item:first-child {
    height: 29px;
    line-height: 28px;
}
.align-panel {
    height: 133px;
    padding: 2px 3px 0 7px;
    border-bottom: 1px solid #171717;
}
.align-title {
    display: flex;
    justify-content: space-between;
    align-items: center;
    height: 26px;
    padding: 0 7px 0 6px;
    color: #c8c8c8;
}
.align-to {
    display: flex;
    align-items: center;
    height: 26px;
    letter-spacing: 1.300px;
}
.align-to > span {
    width: 86px;
}
.align-select {
    display: flex;
    flex: 1;
    align-items: center;
    justify-content: space-between;
    height: 18px;
    padding: 0 6px 0 8px;
    margin-right: -2px;
    border-radius: 3px;
    background: #292929;
    color: #484848;
}
.align-select .chev {
    color: #484848;
}
.align-icons {
    display: grid;
    grid-template-columns: repeat(6, 34.200px);
    height: 23px;
    padding: 2px 0 0 3px;
}
.align-icons svg {
    width: 18px;
    height: 18px;
    color: #3d3d3d;
}
.distribute {
    height: 20px;
    padding-top: 3px;
    border-top: 2px solid #323232;
}

/* timeline */
.timeline {
    position: relative;
    height: 310px;
    margin: 0 1px;
    background: #232323;
}
.tl-tabs {
    display: grid;
    grid-template-columns: 23px 90px 22px 82px 23px 90px 20px 59px 21px 58px 22px 57px 23px 81px 23px 74px 16px 21px 43px 102px 21px 68px 21px 58px 18px 61px 18px 20px;
    align-items: center;
    height: 27px;
    padding-left: 26px;
    line-height: 14px;
}
.tl-tabs span {
    margin-left: -1px;
}
.tl-active {
    display: grid;
    grid-template-columns: 15px 21px 21px 8px;
    width: 66px;
    height: 27px;
    padding-top: 1px;
}
.tl-main {
    display: grid;
    grid-template-columns: 594px 1307px 18px;
    height: 266px;
}
.layers {
    height: 266px;
    padding-top: 5px;
    border-right: 1px solid #000;
}
.layers-top {
    display: grid;
    grid-template-columns: 94px 302px 34px 35px 25px 27px 34px 16px;
    align-items: center;
    height: 32px;
    padding: 0 0 5px 11px;
    border-bottom: 1px solid #000;
}
.timecode b {
    height: 16px;
    color: #2d8ceb;
    font-size: 16px;
    line-height: 16px;
    letter-spacing: 0.600px;
}
.timecode span {
    display: block;
    margin-bottom: -4px;
    color: #1d5a96;
    line-height: 15px;
}
.layer-search {
    display: flex;
    align-items: center;
    width: 287px;
    height: 20px;
    padding-left: 6px;
    border: 1px solid #303030;
    border-radius: 3px;
    background: #161616;
}
.layer-search svg {
    width: 12px;
}
.layer-search i {
    border: 3px solid transparent;
    border-top-color: #a0a0a0;
    margin-top: 5px;
}
.columns {
    display: grid;
    grid-template-columns: 17px 16px 14px 15px 15px 17px 7px 26px 7px 154px 7px 76px 17px 66px 8px 109px 2px;
    align-items: center;
    height: 19px;
    padding: 1px 0 0 6px;
    border-bottom: 1px solid #000;
    background: #2b2b2b;
    line-height: 14px;
    letter-spacing: 0;
}
.columns .cn {
    color: #b8b8b8;
}
.columns .lock { width: 9px; }
.dot {
    width: 7px;
    height: 7px;
    border-radius: 50%;
    background: #b0b0b0;
}
.col-sep {
    width: 1px;
    height: 12px;
    background: #0c0c0c;
}
.layer-row {
    display: grid;
    grid-template-columns: 30px 15px 24px 12px 21px 33px 18px 140px 74px 19px 74px 19px 89px;
    align-items: center;
    height: 20px;
    padding-left: 5px;
    border-bottom: 1px solid #262626;
    background: #303030;
    color: #c0c0c0;
}
.layer-row b {
    font: bold 12px "Liberation Serif", serif;
    color: #b0b0b0;
}
.layer-row .type {
    font-size: 13px;
}
.eye-box {
    display: flex;
    align-items: center;
    width: 13px;
    height: 12px;
    margin-top: -4px;
    background: #222;
}
.box {
    width: 13px;
    height: 13px;
    margin-top: -2px;
    background: #242424;
}
.twirl {
    width: 8px;
    height: 8px;
}
.label {
    width: 15px;
    height: 15px;
    background: #b43838;
}
.cell-select {
    display: flex;
    align-items: center;
    justify-content: space-between;
    height: 17px;
    margin-right: 5px;
    padding: 0 5px 0 6px;
    background: #1d1d1d;
    font-size: 12px;
    letter-spacing: -0.2px;
}
.cell-select span {
    padding-top: 1px;
}
.layer-row > .cell-select:last-child {
    margin-right: 0;
}

.tracks {
    position: relative;
    padding-top: 6px;
}
.navigator {
    display: flex;
    height: 11px;
    border-top: 1px solid #000;
    border-bottom: 1px solid #000;
}
.navigator .cap-l, .navigator .cap-r {
    width: 7px;
    background: #2d8ceb;
    border-radius: 6px 0 0 6px;
    border-right: 1px solid #111;
}
.navigator .cap-r {
    border-radius: 0 6px 6px 0;
    border: 0;
    border-left: 1px solid #111;
}
.nav-bar {
    width: 1292px;
    background: #696969;
}
.time-ruler {
    display: flex;
    height: 19px;
    padding-left: 7px;
    overflow: hidden;
    border-bottom: 1px solid #000;
}
.time-ruler span {
    flex: 0 0 50.280px;
    height: 18px;
    background: linear-gradient(#8a8a8a, #8a8a8a) 0 100% / 1px 5px no-repeat;
    font: 11px/15px "Liberation Mono", monospace;
    letter-spacing: -0.4px;
    text-indent: -10px;
}
.time-ruler span:first-child {
    text-indent: -4px;
}
.work-area {
    position: relative;
    display: flex;
    height: 16px;
    padding-left: 3px;
    border-bottom: 1px solid #000;
}
.work-area .cap-l, .work-area .cap-r {
    width: 5px;
    border-radius: 5px 0 0 5px;
    background: #2d8ceb;
}
.work-area .cap-r {
    margin-left: 1px;
    border-radius: 0 5px 5px 0;
}
.work-bar {
    width: 1291px;
    border-top: 1px solid #777;
    background: #5f5f5f;
}
.marker {
    position: absolute;
    top: 0;
    width: 18px;
    height: 13px;
    border: 1px solid #333;
    background: #b0b0b0;
    color: #222;
    font: 11px/10px "Liberation Serif", serif;
    text-align: center;
}
.m2 { left: 105px; }
.m1 { left: 124px; }
.pent {
    position: absolute;
    top: 7px;
    width: 10px;
    height: 8px;
    background: #b0b0b0;
    clip-path: polygon(50% 0, 100% 50%, 100% 100%, 0 100%, 0 50%);
}
.p2 { left: 99px; }
.p1 { left: 118px; }
.cache {
    display: grid;
    grid-template-columns: 385px 8px 893px;
    column-gap: 3px;
    height: 4px;
    padding-left: 7px;
    border-bottom: 1px solid #000;
}
.cache i {
    background: #16b828;
}
.track-row {
    height: 20px;
    padding: 0 7px;
    border-bottom: 1px solid #262626;
    background: #303030;
}
.track {
    height: 19px;
    padding-top: 2px;
    background: #3b3b3b;
}
.bar {
    height: 16px;
    border: 1px solid #8a4646;
    border-right-color: #5e2a2a;
    border-bottom-color: #5e2a2a;
    background: #7b3939;
}
.track-rest {
    height: 129px;
    margin: 0 7px 0 8px;
    background: #303030;
}
.playhead {
    position: absolute;
    top: 7px;
    left: 409px;
    width: 1px;
    height: 258px;
    background: #2d8ceb;
}
.playhead svg {
    position: relative;
    top: 14px;
    left: -6px;
    width: 13px;
    height: 14px;
    color: #2d8ceb;
}
.tl-side {
    padding: 38px 0 0 2px;
}
.tl-side svg {
    width: 13px;
    height: 14px;
    margin-bottom: 6px;
}
.tl-foot {
    display: grid;
    grid-template-columns: 17px 19px 254px 301px 102px;
    align-items: center;
    width: 701px;
    height: 17px;
    padding: 0 0 1px 6px;
    border-top: 1px solid #000;
}
.foot-on {
    display: flex;
    align-items: center;
    justify-content: center;
    width: 17px;
    height: 15px;
    margin-left: -1px;
    background: #1a1a1a;
}
.switches {
    width: 163px;
    height: 15px;
    border: 1px solid #2b2b2b;
    border-radius: 3px;
    background: #1e1e1e;
    font-size: 11px;
    line-height: 13px;
    text-align: center;
}
.zoomer {
    width: 102px;
    height: 14px;
    margin-left: 2px;
}
.tooltip {
    position: absolute;
    left: 799px;
    top: 42px;
    width: 37px;
    height: 21px;
    border: 1px solid #767676;
    background: #fff;
    box-shadow: 3px 3px 3px rgba(0, 0, 0, 0.5);
    color: #575757;
    font-size: 12px;
    line-height: 19px;
    letter-spacing: 0;
    text-align: center;
}
.bottom-edge {
    height: 2px;
    padding-left: 245px;
    background: #0c0c0c;
}
.bottom-edge i {
    width: 48px;
    height: 2px;
    background: #444;
}
```
